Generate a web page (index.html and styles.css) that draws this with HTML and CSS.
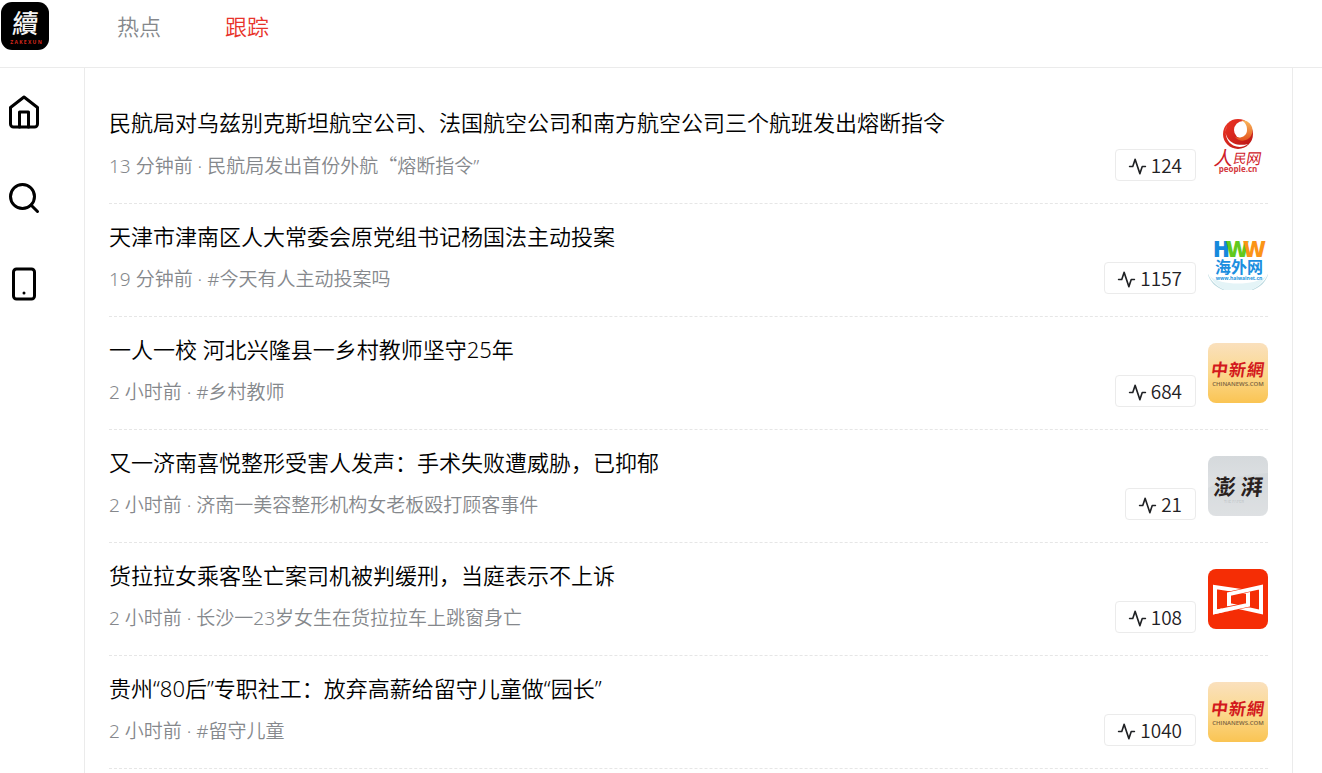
FILE: index.html
```html
<!DOCTYPE html>
<html lang="zh-CN">
<head>
<meta charset="utf-8" />
<meta name="viewport" content="width=device-width, initial-scale=1" />
<title>跟踪</title>
<link rel="stylesheet" href="styles.css">
</head>

<body>

<!-- shared drawings -->
<svg class="defs" aria-hidden="true">
    <defs>
        <linearGradient id="gold" x1="0" y1="0" x2="0" y2="1">
            <stop offset="0" stop-color="#fae0bd" />
            <stop offset="0.5" stop-color="#fbd98f" />
            <stop offset="1" stop-color="#fac453" />
        </linearGradient>
        <linearGradient id="silver" x1="0" y1="0" x2="0" y2="1">
            <stop offset="0" stop-color="#d5d9dc" />
            <stop offset="1" stop-color="#e8e9eb" />
        </linearGradient>
        <linearGradient id="ball" x1="0" y1="0" x2="1" y2="1">
            <stop offset="0" stop-color="#ee3524" />
            <stop offset="1" stop-color="#b81616" />
        </linearGradient>
        <linearGradient id="flame" x1="0" y1="0" x2="0" y2="1">
            <stop offset="0" stop-color="#f9b95c" />
            <stop offset="1" stop-color="#e4541e" />
        </linearGradient>
    </defs>
    <symbol id="pulse" viewBox="0 0 24 24">
        <polyline points="22 12 18 12 15 21 9 3 6 12 2 12" />
    </symbol>
    <symbol id="chinanews" viewBox="0 0 60 60">
        <rect width="60" height="60" rx="8" fill="url(#gold)" />
        <g class="brush" fill="#d3191c" font-weight="700" transform="skewX(-8)">
            <text x="7" y="33" font-size="17">中</text>
            <text x="25" y="33" font-size="17">新</text>
            <text x="43" y="33" font-size="17">網</text>
        </g>
        <text class="latin" x="30" y="43" font-size="6" font-weight="600" text-anchor="middle" fill="#7a6340">CHINANEWS.COM</text>
    </symbol>
</svg>

<header class="header">
    <a class="brand" href="#" aria-label="續">
        <svg viewBox="0 0 48 48">
            <rect width="48" height="48" rx="11" fill="#000" />
            <text class="brush" x="26" y="31" font-size="26" font-weight="500" text-anchor="middle" fill="#f4f4f4" transform="skewX(-4)">續</text>
            <text class="latin" x="25" y="42" font-size="5" font-weight="700" text-anchor="middle" fill="#d8281c">Z A K E X U N</text>
        </svg>
    </a>
    <nav class="tabs">
        <a class="tab" href="#">热点</a>
        <a class="tab active" href="#">跟踪</a>
    </nav>
</header>

<div class="layout">
    <nav class="sidebar">
        <a href="#" aria-label="首页">
            <svg class="icon" viewBox="0 0 24 24">
                <path d="M3 9l9-7 9 7v11a2 2 0 0 1-2 2H5a2 2 0 0 1-2-2z" />
                <polyline points="9 22 9 12 15 12 15 22" />
            </svg>
        </a>
        <a href="#" aria-label="搜索">
            <svg class="icon" viewBox="0 0 24 24">
                <circle cx="11" cy="11" r="8" />
                <line x1="21" y1="21" x2="16.65" y2="16.65" />
            </svg>
        </a>
        <a href="#" aria-label="手机">
            <svg class="icon" viewBox="0 0 24 24">
                <rect x="5" y="2" width="14" height="20" rx="2" />
                <line x1="12" y1="18" x2="12.01" y2="18" />
            </svg>
        </a>
    </nav>

    <main class="main">
        <ul class="news">
            <li class="item">
                <div class="text">
                    <a class="title" href="#">民航局对乌兹别克斯坦航空公司、法国航空公司和南方航空公司三个航班发出熔断指令</a>
                    <p class="meta">13 分钟前 · 民航局发出首份外航<span class="wide">“</span>熔断指令”</p>
                </div>
                <button class="count" type="button"><svg><use href="#pulse" /></svg>124</button>
                <svg class="source" viewBox="0 0 60 60">
                    <circle cx="30" cy="18" r="15" fill="url(#ball)" />
                    <path d="M19 9C14 21 24 32 40 28C30 36 13 27 19 9z" fill="#fff" />
                    <circle cx="35" cy="14" r="9" fill="#fff" />
                    <path d="M33 4C43 4 47 13 43 20C39 26 31 26 27 21C33 23 39 20 39 14C39 9 37 6 33 4z" fill="url(#flame)" />
                    <g class="brush" fill="#cf2027" transform="skewX(-10)">
                        <text x="14" y="49" font-size="19" font-weight="400">人</text>
                        <text x="33" y="47" font-size="13" font-weight="400">民</text>
                        <text x="46" y="48" font-size="15" font-weight="400">网</text>
                    </g>
                    <text class="latin" x="30" y="56" font-size="8" font-weight="700" text-anchor="middle" fill="#d5383d">people.cn</text>
                </svg>
            </li>
            <li class="item">
                <div class="text">
                    <a class="title" href="#">天津市津南区人大常委会原党组书记杨国法主动投案</a>
                    <p class="meta">19 分钟前 · #今天有人主动投案吗</p>
                </div>
                <button class="count" type="button"><svg><use href="#pulse" /></svg>1157</button>
                <svg class="source" viewBox="0 0 60 60">
                    <path d="M0 44C4 53 10 57 17 60H43C50 57 56 53 60 44V45C57 53 52 57 45 60H15C8 57 3 53 0 45z" fill="#b8d8df" />
                    <path d="M2 46C6 53 10 57 17 60H43C50 57 54 53 58 46C48 56 12 56 2 46z" fill="#e4f4f7" />
                    <g class="latin" font-size="22" font-weight="800">
                        <text x="5" y="27" fill="#1689dc">H</text>
                        <text x="18" y="27" fill="#62c91d">W</text>
                        <text x="35" y="27" fill="#fb9417">W</text>
                    </g>
                    <text class="brush" x="31" y="43" font-size="16" font-weight="700" text-anchor="middle" fill="#1c8fdf">海外网</text>
                    <text class="latin" x="31" y="50" font-size="5" font-weight="700" text-anchor="middle" fill="#2596dd">www.haiwainet.cn</text>
                </svg>
            </li>
            <li class="item">
                <div class="text">
                    <a class="title" href="#">一人一校 河北兴隆县一乡村教师坚守25年</a>
                    <p class="meta">2 小时前 · #乡村教师</p>
                </div>
                <button class="count" type="button"><svg><use href="#pulse" /></svg>684</button>
                <svg class="source"><use href="#chinanews" /></svg>
            </li>
            <li class="item">
                <div class="text">
                    <a class="title" href="#">又一济南喜悦整形受害人发声：手术失败遭威胁，已抑郁</a>
                    <p class="meta">2 小时前 · 济南一美容整形机构女老板殴打顾客事件</p>
                </div>
                <button class="count" type="button"><svg><use href="#pulse" /></svg>21</button>
                <svg class="source" viewBox="0 0 60 60">
                    <rect width="60" height="60" rx="8" fill="url(#silver)" />
                    <path d="M0 32C14 25 34 18 60 17V52C60 57 57 60 52 60H8C3 60 0 57 0 52z" fill="#c7ccd0" opacity="0.3" />
                    <g class="brush" fill="#2a2220" font-size="22" font-weight="700" transform="skewX(-6)">
                        <text x="9" y="39">澎</text>
                        <text x="36" y="39">湃</text>
                    </g>
                    <text class="latin" x="26" y="47" font-size="4" text-anchor="middle" fill="#a9adb0">THE PAPER</text>
                </svg>
            </li>
            <li class="item">
                <div class="text">
                    <a class="title" href="#">货拉拉女乘客坠亡案司机被判缓刑，当庭表示不上诉</a>
                    <p class="meta">2 小时前 · 长沙一23岁女生在货拉拉车上跳窗身亡</p>
                </div>
                <button class="count" type="button"><svg><use href="#pulse" /></svg>108</button>
                <svg class="source" viewBox="0 0 60 60">
                    <rect width="60" height="60" rx="8" fill="#f52d05" />
                    <!-- two interlocked frames -->
                    <g fill="none" stroke="#fff" stroke-width="4">
                        <path d="M40 23V36L7 43V18z" />
                        <path d="M21 36V25L53 18V43z" stroke="#f52d05" stroke-width="5" />
                        <path d="M21 36V25L53 18V43z" />
                        <path d="M40 27V36L14 41" stroke="#f52d05" stroke-width="5" />
                        <path d="M40 27V36L7 43V20" />
                    </g>
                </svg>
            </li>
            <li class="item">
                <div class="text">
                    <a class="title" href="#">贵州“80后”专职社工：放弃高薪给留守儿童做“园长”</a>
                    <p class="meta">2 小时前 · #留守儿童</p>
                </div>
                <button class="count" type="button"><svg><use href="#pulse" /></svg>1040</button>
                <svg class="source"><use href="#chinanews" /></svg>
            </li>
        </ul>
    </main>
</div>

</body>
</html>
```

FILE: styles.css
```css
* {
    box-sizing: border-box;
}

body {
    background: #fff;
    color: #000;
    display: flex;
    flex-direction: column;
    font-family: "Noto Sans", "Noto Sans CJK SC", sans-serif;
    font-weight: 350;
    margin: 0;
    min-height: 100vh;
}

a {
    color: inherit;
    text-decoration: none;
}

.defs {
    height: 0;
    position: absolute;
    width: 0;
}

.header {
    align-items: flex-start;
    border-bottom: 1px solid #ebebeb;
    display: flex;
    gap: 68px;
    height: 68px;
    padding: 2px 1px;
}

.brand,
.brand svg {
    display: block;
    height: 48px;
    width: 48px;
}

.tabs {
    display: flex;
    gap: 64px;
}

.tab {
    color: #85888c;
    font-size: 22px;
    line-height: 48px;
}

.tab.active {
    color: #e8342b;
}

.layout {
    display: flex;
    flex: 1;
}

.sidebar {
    display: flex;
    flex-direction: column;
    gap: 50px;
    padding: 26px 6px;
    width: 84px;
}

.sidebar a,
.icon {
    display: block;
    height: 36px;
    width: 36px;
}

.icon,
.count svg {
    fill: none;
    stroke: currentColor;
    stroke-linecap: round;
    stroke-linejoin: round;
    stroke-width: 2;
}

.main {
    border-left: 1px solid #ebebeb;
    border-right: 1px solid #ebebeb;
    flex: 1;
    margin-right: 29px;
    min-width: 0;
    padding: 22px 24px 0;
}

.news {
    list-style: none;
    margin: 0;
    padding: 0;
}

.item {
    align-items: flex-end;
    border-bottom: 1px dashed #e6e6e6;
    display: flex;
    gap: 12px;
    padding: 15px 0 22px;
}

.text {
    flex: 1;
    min-width: 0;
}

.title {
    display: block;
    font-size: 22px;
    line-height: 34px;
}

.meta {
    color: #85888c;
    font-size: 19px;
    line-height: 30px;
    margin: 11px 0 0;
}

.wide {
    font-family: "Noto Sans CJK SC", sans-serif;
}

.count {
    align-items: center;
    background: #fff;
    border: 1px solid #ebebeb;
    border-radius: 4px;
    color: #1f2124;
    display: flex;
    font-family: "Noto Sans CJK SC", sans-serif;
    font-size: 19px;
    font-weight: 350;
    gap: 4px;
    height: 32px;
    line-height: 30px;
    padding: 0 13px 0 12px;
}

.count svg {
    height: 19px;
    margin-top: 3px;
    width: 19px;
}

.source {
    align-self: center;
    flex: none;
    height: 60px;
    margin-bottom: -6px;
    width: 60px;
}

.brush {
    font-family: "Noto Sans CJK SC", sans-serif;
}

.latin {
    font-family: "Open Sans", sans-serif;
}
```
